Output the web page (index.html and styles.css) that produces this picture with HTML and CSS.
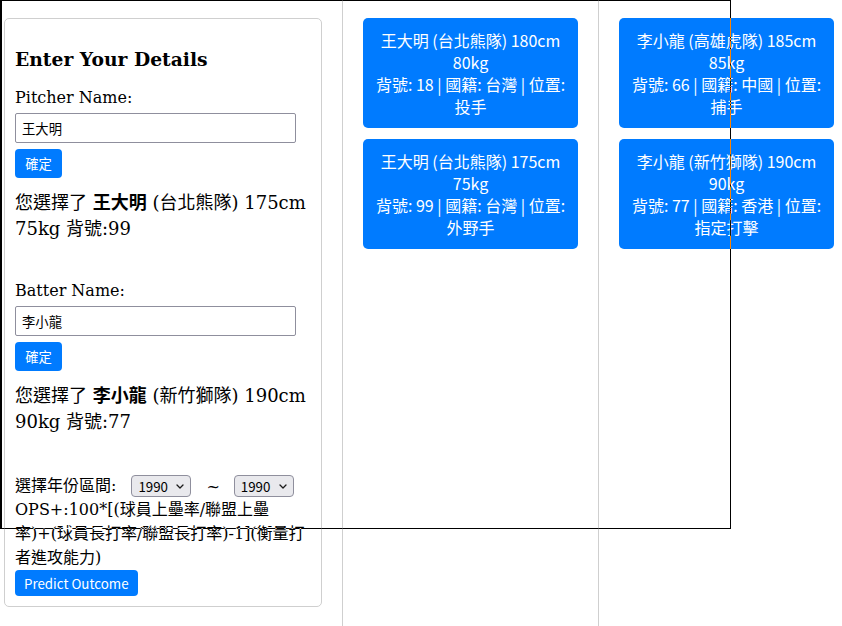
FILE: index.html
```html
<!DOCTYPE html>
<html lang="zh-Hant">
<head>
<meta charset="utf-8">
<title>Pitcher vs Batter</title>
<link rel="stylesheet" href="styles.css">
</head>
<body>
<div class="page">
  <aside class="col-form">
    <div class="panel">
      <h3 class="panel-title">Enter Your Details</h3>

      <label class="field-label">Pitcher Name:</label>
      <input class="text-input" type="text" value="王大明">
      <button class="btn btn-confirm">確定</button>
      <p class="selection">您選擇了 <strong>王大明</strong> (台北熊隊) 175cm 75kg 背號:99</p>

      <label class="field-label">Batter Name:</label>
      <input class="text-input" type="text" value="李小龍">
      <button class="btn btn-confirm">確定</button>
      <p class="selection">您選擇了 <strong>李小龍</strong> (新竹獅隊) 190cm 90kg 背號:77</p>

      <div class="year-row">
        <span class="year-label">選擇年份區間:</span>
        <span class="select-wrap">
          <select class="year-select"><option>1990</option></select>
          <svg class="chev" width="8" height="5" viewBox="0 0 8 5"><path d="M1 1l3 3 3-3" stroke="#1b1b1b" stroke-width="1.3" fill="none" stroke-linecap="round" stroke-linejoin="round"/></svg>
        </span>
        <span class="tilde">~</span>
        <span class="select-wrap">
          <select class="year-select"><option>1990</option></select>
          <svg class="chev" width="8" height="5" viewBox="0 0 8 5"><path d="M1 1l3 3 3-3" stroke="#1b1b1b" stroke-width="1.3" fill="none" stroke-linecap="round" stroke-linejoin="round"/></svg>
        </span>
      </div>
      <p class="ops">OPS+:100*[(球員上壘率/聯盟上壘率<span class="nowrap">)+(</span>球員長打率/聯盟長打率)-1](衡量打者進攻能力)</p>
      <button class="btn btn-predict">Predict Outcome</button>
    </div>
  </aside>

  <section class="col-list">
    <div class="player-card">王大明 (台北熊隊) 180cm 80kg<br>背號: 18 | 國籍: 台灣 | 位置: 投手</div>
    <div class="player-card">王大明 (台北熊隊) 175cm 75kg<br>背號: 99 | 國籍: 台灣 | 位置: 外野手</div>
  </section>

  <section class="col-list col-last">
    <div class="player-card">李小龍 (高雄虎隊) 185cm 85kg<br>背號: 66 | 國籍: 中國 | 位置: 捕手</div>
    <div class="player-card">李小龍 (新竹獅隊) 190cm 90kg<br>背號: 77 | 國籍: 香港 | 位置: 指定打擊</div>
  </section>
</div>
<div class="debug-frame"></div>
</body>
</html>
```

FILE: styles.css
```css
html, body {
  margin: 0;
  background: #fff;
}

body {
  font-family: "DejaVu Serif", "Noto Sans CJK TC", serif;
  font-size: 16px;
  color: #000;
  overflow: hidden;
}

.page {
  display: grid;
  grid-template-columns: 342px 256px 244px;
  min-height: 626px;
  background: #fff;
}

.col-form {
  padding: 18px 0 0 4px;
}

.panel {
  width: 318px;
  box-sizing: border-box;
  border: 1px solid #cfcfcf;
  border-radius: 5px;
  padding: 10px;
}

.panel-title {
  font-size: 18.72px;
  font-weight: bold;
  line-height: normal;
  margin: 18.72px 0;
}

.field-label {
  display: block;
  line-height: normal;
  margin-bottom: 6px;
}

.text-input {
  display: block;
  box-sizing: border-box;
  width: 281px;
  height: 30px;
  margin: 0 0 6px;
  padding: 0 6px;
  border: 1px solid #8f8f9d;
  border-radius: 2px;
  background: #fff;
  color: #000;
  font: 13.33px "Noto Sans CJK TC", sans-serif;
}

.btn {
  display: block;
  border: 0;
  border-radius: 4px;
  background: #007bff;
  color: #fff;
  font: 13.33px "Noto Sans CJK TC", sans-serif;
  padding: 0 10px;
  margin: 0;
}

.btn-confirm {
  width: 47px;
  height: 29px;
  padding: 0;
}

.btn-predict {
  height: 26px;
  padding: 0 9px;
}

.selection {
  font-size: 18px;
  line-height: 26px;
  margin: 12px 0 39px;
}

.year-row {
  display: flex;
  align-items: center;
  height: 24px;
}

.year-label {
  line-height: 24px;
}

.select-wrap {
  position: relative;
  display: inline-block;
  height: 22px;
  margin-left: 15px;
}

.tilde + .select-wrap {
  margin-left: 0;
}

.year-select {
  appearance: none;
  -webkit-appearance: none;
  box-sizing: border-box;
  width: 60px;
  height: 22px;
  margin: 0;
  padding: 0 0 0 6px;
  border: 1px solid #8f8f9d;
  border-radius: 4px;
  background: #e9e9ed;
  color: #000;
  font: 13.33px "Noto Sans CJK TC", sans-serif;
}

.chev {
  position: absolute;
  right: 7px;
  top: 9px;
  pointer-events: none;
}

.tilde {
  margin: 0 14px 0 15px;
}

.ops {
  line-height: 24px;
  margin: 0;
}

.nowrap {
  white-space: nowrap;
}

.col-list {
  box-sizing: border-box;
  border-left: 1px solid #cfcfcf;
  padding: 18px 20px 0;
}

.col-last {
  padding-right: 8px;
}

.player-card {
  width: 215px;
  box-sizing: border-box;
  margin-bottom: 11px;
  padding: 11px 10px;
  border-radius: 5px;
  background: #007bff;
  color: #fff;
  text-align: center;
  font: 16px/22px "Noto Sans CJK TC", sans-serif;
}

.debug-frame {
  position: fixed;
  left: 0;
  top: 0;
  width: 731px;
  height: 529px;
  box-sizing: border-box;
  border: 1px solid #fff;
  border-left-width: 2px;
  mix-blend-mode: difference;
  pointer-events: none;
}
```
